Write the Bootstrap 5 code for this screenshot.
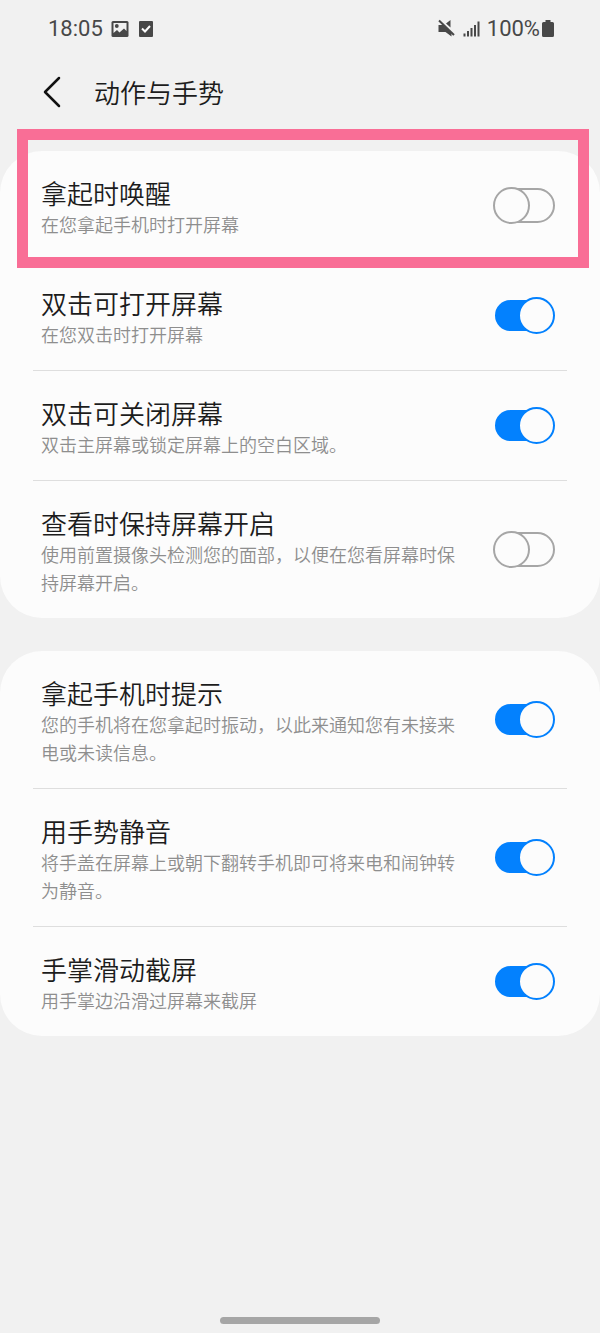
<!DOCTYPE html>
<html lang="zh-CN">
<head>
<meta charset="utf-8">
<meta name="viewport" content="width=device-width, initial-scale=1">
<title>动作与手势</title>
<link rel="stylesheet" href="https://cdn.jsdelivr.net/npm/bootstrap@5.3.0/dist/css/bootstrap.min.css">
<style>
  body { background: #f1f1f1; color: #1c1c1c; font-family: Roboto, "Noto Sans CJK SC", sans-serif; }
  .status-bar { height: 58px; padding: 0 46px 0 48px; color: #484848; font-size: 22px; line-height: 28px; }
  .status-left { gap: 8px; }
  .status-right { gap: 7px; }
  .battery { gap: 2px; }
  .title-bar { height: 68px; padding-left: 42px; gap: 32px; }
  .title-bar h1 { font-family: "Noto Sans CJK SC", sans-serif; font-size: 26px; line-height: 36px; font-weight: 350; }
  .back { color: #111; line-height: 0; }
  .groups { padding-top: 25px; gap: 33px; }
  .group { background: #fcfcfc; border-radius: 42px; padding: 0 33px; }
  .setting { padding: 22px 12px 22px 8px; gap: 28px; font-family: "Noto Sans CJK SC", sans-serif; font-weight: 350; }
  .setting + .setting { border-top: 1px solid #dedede; }
  .setting-text { padding-top: 3px; }
  .setting label { font-size: 26px; line-height: 34px; }
  .setting p { font-size: 18px; line-height: 28px; color: #8e8e8e; }
  .marker { position: absolute; inset: -22px -22px -8px -16px; border: 11px solid #f96e96; pointer-events: none; }

  .toggle { appearance: none; position: relative; width: 62px; height: 37px; margin: 0; background: none; cursor: pointer; }
  .toggle::before { content: ""; position: absolute; inset: 1px 0 1px 4px; border: 2px solid #a6a6a6; border-radius: 18px; }
  .toggle::after { content: ""; position: absolute; top: 0; left: 0; width: 37px; height: 37px; border: 2px solid #a6a6a6; border-radius: 50%; background: #fcfcfc; }
  .toggle:checked::before { inset: 3px 8px 3px 2px; border-color: #0381fe; background: #0381fe; }
  .toggle:checked::after { left: auto; right: 0; border-color: #0381fe; }
  .home-handle { width: 160px; height: 7px; margin-bottom: 9px; background: #a6a6a6; }
</style>
</head>
<body>
<div class="min-vh-100 d-flex flex-column">
  <header>
    <div class="status-bar d-flex align-items-center justify-content-between">
      <div class="status-left d-flex align-items-center">
        <span>18:05</span>
        <svg width="18" height="18" viewBox="0 0 18 18" aria-hidden="true"><rect x="0.500" y="1" width="17" height="16" rx="1.500" fill="currentColor"/><path fill="#f1f1f1" d="M2.500 3h13v8l-2.500-2.500-4.500 4-2.500-2.500-3.500 3z"/><circle cx="5.800" cy="6" r="1.900" fill="currentColor"/></svg>
        <svg width="18" height="18" viewBox="0 0 18 18" aria-hidden="true"><rect x="2" y="1" width="14" height="16" rx="1" fill="currentColor"/><path d="M5 8.500l3 3 5-5.500" fill="none" stroke="#fff" stroke-width="2"/></svg>
      </div>
      <div class="status-right d-flex align-items-center">
        <svg width="18" height="20" viewBox="0 0 18 20" aria-hidden="true"><path fill="currentColor" d="M8 4.500l4.500-3.500v7.500zM.5 6h5l8 7.500v4l-6-4.500h-7z"/><path d="M1 1.500l15 14.500" stroke="currentColor" stroke-width="2"/></svg>
        <svg width="17" height="20" viewBox="0 0 17 20" aria-hidden="true"><path d="M1.500 14.500v3M5 12v5.500M8.500 9v8.500M12 6v11.500M15.500 2.500v15" stroke="currentColor" stroke-width="2"/></svg>
        <div class="battery d-flex align-items-center">
          <span>100%</span>
          <svg width="12" height="20" viewBox="0 0 12 20" aria-hidden="true"><path fill="currentColor" d="M3.500 1h5v2h2q1.500 0 1.500 1.500v12q0 1.500-1.500 1.500h-9q-1.500 0-1.500-1.500v-12q0-1.500 1.500-1.500h2z"/></svg>
        </div>
      </div>
    </div>
    <div class="title-bar d-flex align-items-center">
      <button type="button" class="back btn p-0 border-0" aria-label="返回"><svg width="20" height="32" viewBox="0 0 20 32"><path d="M17 2L3 16l14 14" fill="none" stroke="currentColor" stroke-width="2.500" stroke-linecap="round" stroke-linejoin="round"/></svg></button>
      <h1 class="m-0">动作与手势</h1>
    </div>
  </header>

  <main class="groups d-flex flex-column">
    <section class="group">
      <div class="setting d-flex align-items-center position-relative">
        <div class="setting-text flex-fill">
          <label class="d-block" for="lift-wake">拿起时唤醒</label>
          <p class="m-0" id="lift-wake-note">在您拿起手机时打开屏幕</p>
        </div>
        <input class="toggle flex-shrink-0" type="checkbox" role="switch" id="lift-wake" aria-describedby="lift-wake-note">
        <div class="marker"></div>
      </div>
      <div class="setting d-flex align-items-center">
        <div class="setting-text flex-fill">
          <label class="d-block" for="tap-on">双击可打开屏幕</label>
          <p class="m-0" id="tap-on-note">在您双击时打开屏幕</p>
        </div>
        <input class="toggle flex-shrink-0" type="checkbox" role="switch" id="tap-on" aria-describedby="tap-on-note" checked>
      </div>
      <div class="setting d-flex align-items-center">
        <div class="setting-text flex-fill">
          <label class="d-block" for="tap-off">双击可关闭屏幕</label>
          <p class="m-0" id="tap-off-note">双击主屏幕或锁定屏幕上的空白区域。</p>
        </div>
        <input class="toggle flex-shrink-0" type="checkbox" role="switch" id="tap-off" aria-describedby="tap-off-note" checked>
      </div>
      <div class="setting d-flex align-items-center">
        <div class="setting-text flex-fill">
          <label class="d-block" for="stay-on">查看时保持屏幕开启</label>
          <p class="m-0" id="stay-on-note">使用前置摄像头检测您的面部，以便在您看屏幕时保持屏幕开启。</p>
        </div>
        <input class="toggle flex-shrink-0" type="checkbox" role="switch" id="stay-on" aria-describedby="stay-on-note">
      </div>
    </section>

    <section class="group">
      <div class="setting d-flex align-items-center">
        <div class="setting-text flex-fill">
          <label class="d-block" for="lift-alert">拿起手机时提示</label>
          <p class="m-0" id="lift-alert-note">您的手机将在您拿起时振动，以此来通知您有未接来电或未读信息。</p>
        </div>
        <input class="toggle flex-shrink-0" type="checkbox" role="switch" id="lift-alert" aria-describedby="lift-alert-note" checked>
      </div>
      <div class="setting d-flex align-items-center">
        <div class="setting-text flex-fill">
          <label class="d-block" for="mute">用手势静音</label>
          <p class="m-0" id="mute-note">将手盖在屏幕上或朝下翻转手机即可将来电和闹钟转为静音。</p>
        </div>
        <input class="toggle flex-shrink-0" type="checkbox" role="switch" id="mute" aria-describedby="mute-note" checked>
      </div>
      <div class="setting d-flex align-items-center">
        <div class="setting-text flex-fill">
          <label class="d-block" for="palm">手掌滑动截屏</label>
          <p class="m-0" id="palm-note">用手掌边沿滑过屏幕来截屏</p>
        </div>
        <input class="toggle flex-shrink-0" type="checkbox" role="switch" id="palm" aria-describedby="palm-note" checked>
      </div>
    </section>
  </main>

  <footer class="mt-auto pt-4 d-flex justify-content-center"><div class="home-handle rounded-pill"></div></footer>
</div>
<script src="https://cdn.jsdelivr.net/npm/bootstrap@5.3.0/dist/js/bootstrap.bundle.min.js"></script>
</body>
</html>
